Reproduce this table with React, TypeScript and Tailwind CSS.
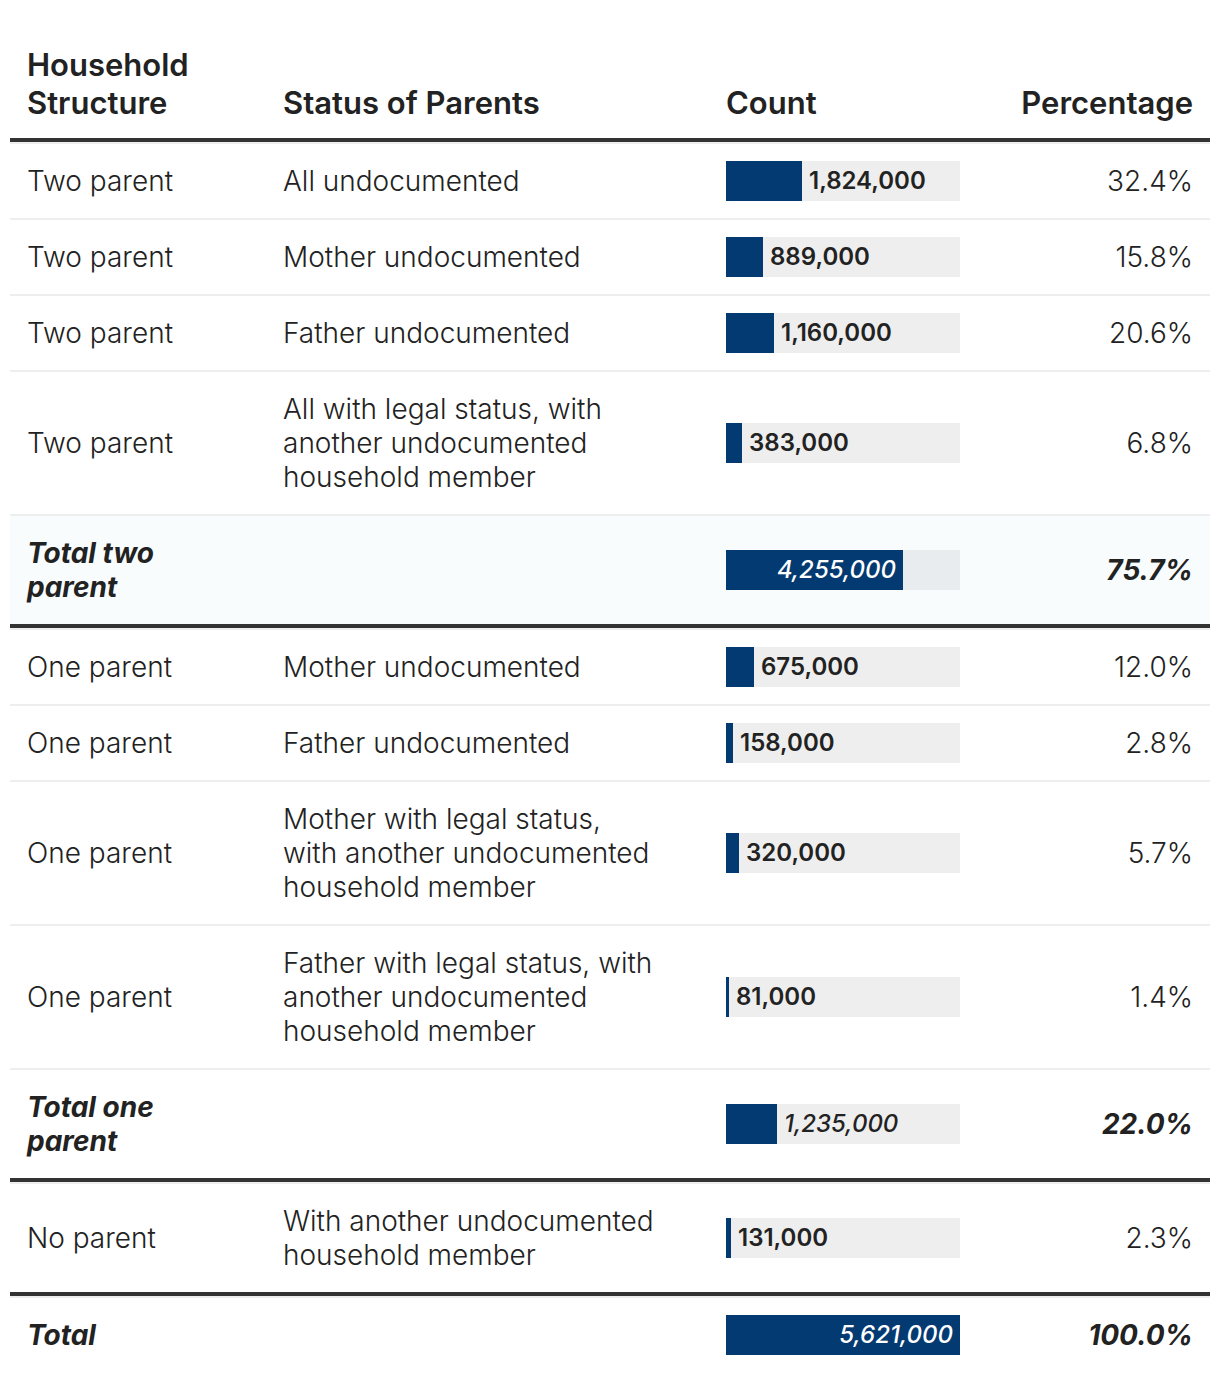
import React from "react"

type Row = {
  structure: string[]
  status: string[]
  count: number
  pct: string
  kind?: "total"
  tone?: boolean
}

const MAX = 5621000
const BAR_W = 234

const groups: { rows: Row[] }[] = [
  {
    rows: [
      { structure: ["Two parent"], status: ["All undocumented"], count: 1824000, pct: "32.4%" },
      { structure: ["Two parent"], status: ["Mother undocumented"], count: 889000, pct: "15.8%" },
      { structure: ["Two parent"], status: ["Father undocumented"], count: 1160000, pct: "20.6%" },
      {
        structure: ["Two parent"],
        status: ["All with legal status, with", "another undocumented", "household member"],
        count: 383000,
        pct: "6.8%",
      },
      { structure: ["Total two", "parent"], status: [], count: 4255000, pct: "75.7%", kind: "total", tone: true },
    ],
  },
  {
    rows: [
      { structure: ["One parent"], status: ["Mother undocumented"], count: 675000, pct: "12.0%" },
      { structure: ["One parent"], status: ["Father undocumented"], count: 158000, pct: "2.8%" },
      {
        structure: ["One parent"],
        status: ["Mother with legal status,", "with another undocumented", "household member"],
        count: 320000,
        pct: "5.7%",
      },
      {
        structure: ["One parent"],
        status: ["Father with legal status, with", "another undocumented", "household member"],
        count: 81000,
        pct: "1.4%",
      },
      { structure: ["Total one", "parent"], status: [], count: 1235000, pct: "22.0%", kind: "total" },
    ],
  },
  {
    rows: [
      {
        structure: ["No parent"],
        status: ["With another undocumented", "household member"],
        count: 131000,
        pct: "2.3%",
      },
    ],
  },
]

const fmt = (n: number) => n.toLocaleString("en-US")

function Bar({ value, total, tone }: { value: number; total?: boolean; tone?: boolean }) {
  const w = Math.max(3, Math.round((value / MAX) * BAR_W))
  const inside = total && w > 130
  return (
    <div className={`relative h-[40px] w-[234px] -my-[3px] ${tone ? "bg-[#e9ecee]" : "bg-[#eeeeee]"}`}>
      <div className="absolute left-0 top-0 h-full bg-[#033a71]" style={{ width: w }} />
      {inside ? (
        <span
          className="absolute top-0 flex h-full items-center justify-end pr-[7px] text-[24px] font-medium italic whitespace-nowrap text-white"
          style={{ width: w }}
        >
          {fmt(value)}
        </span>
      ) : (
        <span
          className={`absolute top-0 flex h-full items-center whitespace-nowrap text-[24px] text-[#222] ${total ? "font-medium italic" : "font-semibold"}`}
          style={{ left: w + 7 }}
        >
          {fmt(value)}
        </span>
      )}
    </div>
  )
}

function TableRow({ row }: { row: Row }) {
  const total = row.kind === "total"
  return (
    <div
      className={`grid grid-cols-[256px_443px_268px_233px] items-center border-t-2 border-[#eeeeee] ${row.tone ? "bg-[#f8fcfd]" : ""}`}
    >
      <div className={`px-[17px] py-[20px] leading-[34px] ${total ? "font-bold italic" : "font-light"}`}>
        {row.structure.map((l, i) => (
          <div key={i} className="whitespace-nowrap">{l}</div>
        ))}
      </div>
      <div className="px-[17px] py-[20px] leading-[34px] font-light">
        {row.status.map((l, i) => (
          <div key={i} className="whitespace-nowrap">{l}</div>
        ))}
      </div>
      <div className="px-[17px] py-[20px]">
        <Bar value={row.count} total={total} tone={row.tone} />
      </div>
      <div className={`px-[17px] py-[20px] text-right leading-[34px] ${total ? "font-bold italic" : "font-light"}`}>
        {row.pct}
      </div>
    </div>
  )
}

export default function App() {
  return (
    <div className="min-h-screen bg-white pt-[30px] text-[28px] text-[#222]" style={{ fontFamily: "Inter, 'Noto Sans', sans-serif" }}>
      <div className="ml-[10px] w-[1200px]">
        <div className="grid grid-cols-[256px_443px_268px_233px] items-end border-b-4 border-[#333] text-[31px] font-semibold leading-[38px]">
          <div className="px-[17px] pt-[16px] pb-[16px]">
            Household
            <br />
            Structure
          </div>
          <div className="px-[17px] pb-[16px] whitespace-nowrap">Status of Parents</div>
          <div className="px-[17px] pb-[16px]">Count</div>
          <div className="px-[17px] pb-[16px] text-right">Percentage</div>
        </div>

        {groups.map((g, gi) => (
          <div key={gi} className="border-b-4 border-[#333]">
            {g.rows.map((r, ri) => (
              <TableRow key={ri} row={r} />
            ))}
          </div>
        ))}

        <TableRow
          row={{ structure: ["Total"], status: [], count: 5621000, pct: "100.0%", kind: "total" }}
        />
      </div>
    </div>
  )
}
